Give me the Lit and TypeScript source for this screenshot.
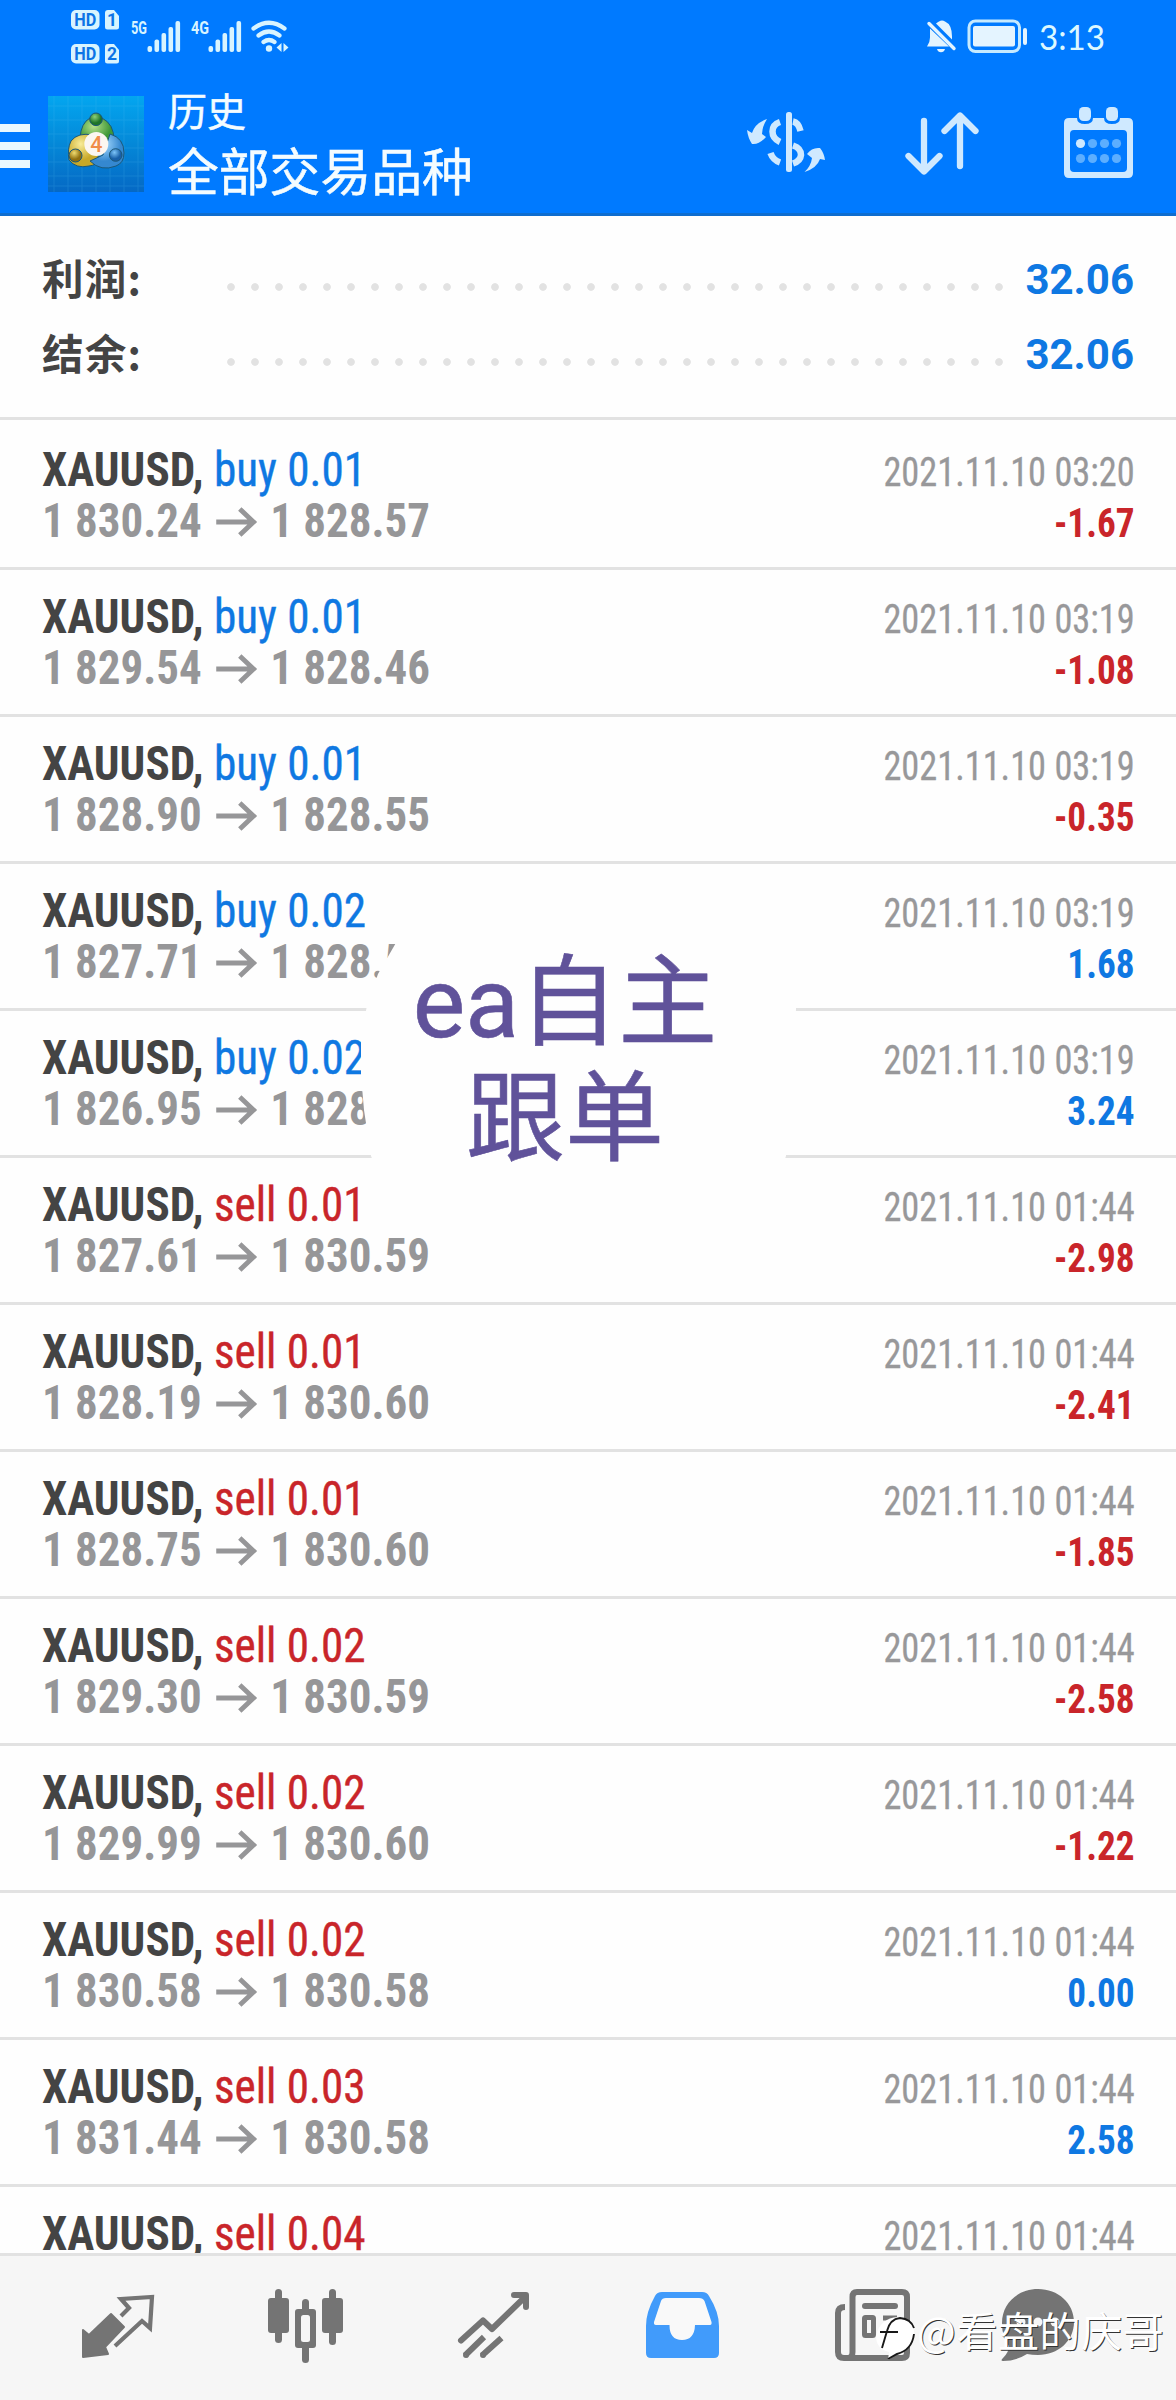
import { LitElement, html, css, svg } from "lit";
import { customElement } from "lit/decorators.js";

type Deal = { side: "buy" | "sell"; lot: string; open: string; close: string; time: string; profit: string };

const d = (side: "buy" | "sell", lot: string, open: string, close: string, time: string, profit: string): Deal => ({
  side, lot, open, close, time, profit,
});

const deals: Deal[] = [
  d("buy", "0.01", "1 830.24", "1 828.57", "03:20", "-1.67"),
  d("buy", "0.01", "1 829.54", "1 828.46", "03:19", "-1.08"),
  d("buy", "0.01", "1 828.90", "1 828.55", "03:19", "-0.35"),
  d("buy", "0.02", "1 827.71", "1 828.55", "03:19", "1.68"),
  d("buy", "0.02", "1 826.95", "1 828.57", "03:19", "3.24"),
  d("sell", "0.01", "1 827.61", "1 830.59", "01:44", "-2.98"),
  d("sell", "0.01", "1 828.19", "1 830.60", "01:44", "-2.41"),
  d("sell", "0.01", "1 828.75", "1 830.60", "01:44", "-1.85"),
  d("sell", "0.02", "1 829.30", "1 830.59", "01:44", "-2.58"),
  d("sell", "0.02", "1 829.99", "1 830.60", "01:44", "-1.22"),
  d("sell", "0.02", "1 830.58", "1 830.58", "01:44", "0.00"),
  d("sell", "0.03", "1 831.44", "1 830.58", "01:44", "2.58"),
  d("sell", "0.04", "", "", "01:44", ""),
];

const bars = (x: number) =>
  [0, 1, 2, 3, 4].map((i) => {
    const h = [6, 12.5, 19, 25, 31][i];
    return svg`<rect x=${x + i * 7} y=${52 - h} width="4.6" height=${h} rx="2"/>`;
  });

@customElement("app-root")
export class AppRoot extends LitElement {
  static styles = css`
    :host { display: block; width: 1176px; height: 2400px; overflow: hidden; position: relative;
      background: #fefefe; font-family: Roboto, "Noto Sans CJK SC", sans-serif; }
    * { box-sizing: border-box; }
    svg { display: block; flex: none; overflow: visible; }
    .page { height: 2400px; display: flex; flex-direction: column; }
    .head { flex: none; height: 216px; background: #007aff; border-bottom: 3px solid #0e6dcf; }
    .status { height: 72px; display: flex; justify-content: space-between; padding: 0 70px; }
    .bar { display: flex; height: 141px; align-items: flex-start; color: #f4fcff; }
    .burger { width: 30px; margin-top: 52px; display: grid; gap: 10px; }
    .burger i { height: 8px; background: #eaf8ff; }
    .logo { margin: 24px 0 0 18px; }
    .titles { margin-left: 24px; padding-top: 12px; flex: 1; -webkit-text-stroke: 0.5px #f4fcff; }
    .t1 { font-size: 39px; line-height: 58px; }
    .t2 { font-size: 50.8px; line-height: 64px; white-space: nowrap; }
    .acts { display: flex; margin: 32px 41px 0 0; }
    .acts svg:nth-child(2) { margin: 0 82px 0 77px; }
    .sum { flex: none; height: 204px; border-bottom: 3px solid #e2e2e2; padding: 26px 42px 0 42px; }
    .srow { display: flex; height: 75px; line-height: 75px; align-items: center; color: #444; font-weight: 700; font-size: 42px; }
    .slabel { width: 177px; flex: none; font-size: 41.5px; line-height: 71px; margin-top: -4px; letter-spacing: 1.2px; font-family: "Noto Sans CJK SC", sans-serif; }
    .dots { width: 790px; flex: none; height: 8px; margin-top: 14px;
      background: radial-gradient(circle at 12px 4px, #e2e2e2 3.4px, transparent 4.2px) 0 0 / 24px 8px; }
    .sval { flex: 1; text-align: right; color: #0f78e2; }
    .list { flex: 1; min-height: 0; overflow: hidden; padding-top: 3px; }
    .deal { height: 147px; border-bottom: 3px solid #e2e2e2; padding: 21px 41px 0 42px;
      display: flex; justify-content: space-between; line-height: 51px; white-space: nowrap;
      font-family: "Roboto Condensed", Roboto, sans-serif; font-stretch: 75%; }
    .deal:last-child { height: 67px; border: 0; }
    .main { font-size: 48px; transform: scaleX(0.9405); transform-origin: 0 0; }
    .sym { font-weight: 700; color: #444; }
    .buy, .pos { color: #0f78e2; }
    .sell, .neg { color: #c9252a; }
    .main .buy, .main .sell { -webkit-text-stroke: 0.4px currentColor; }
    .prices { display: flex; font-weight: 700; color: #969698; align-items: center; transform: scaleX(0.996); transform-origin: 0 0; }
    .arrow { margin: 3px 14px 0 15px; }
    .side { font-size: 40px; text-align: right; padding-top: 3px; }
    .time { color: #98989a; transform: scaleX(0.908); transform-origin: 100% 0; -webkit-text-stroke: 0.3px currentColor; }
    .profit { font-weight: 700; transform: scaleX(0.93); transform-origin: 100% 0; }
    .nav { flex: none; height: 147px; border-top: 3px solid #e2e2e2; background: #f6f6f6;
      display: grid; grid-template-columns: repeat(5, 188px) 148px; padding: 30px 64px 0 24px; justify-items: center; }
    .blob { position: absolute; left: 356px; top: 930px; }
    .note { position: absolute; left: 365px; top: 945px; width: 400px; text-align: center; color: #60529a;
      font-size: 99px; line-height: 116px; -webkit-text-stroke: 0.6px #60529a; }
    .brand { position: absolute; left: 873px; top: 2302px; display: flex; align-items: flex-start; color: #fff;
      font-family: "Noto Sans CJK SC", sans-serif; font-size: 41px; line-height: 54px; letter-spacing: 0.6px; white-space: nowrap;
      text-shadow: 1px 1px 0 #333; }
    .brand svg { margin-top: 11px; }
  `;

  private statusLeft() {
    return html`<svg width="230" height="72" viewBox="70 0 230 72" fill="#d8f4ff" font-family="Roboto">
      ${[0, 34].map((y, i) => svg`<g transform=${`translate(0 ${y})`}>
        <rect x="71" y="10" width="28.500" height="19.500" rx="5"/>
        <path d="M105 13q0-3 3-3h6l5 6v11q0 2.500-2.500 2.500h-9q-2.500 0-2.500-2.500z"/>
        <g fill="#0c74e6" font-weight="700" text-anchor="middle"><text x="85.300" y="26" font-size="17.500" textLength="22" lengthAdjust="spacingAndGlyphs">HD</text><text x="112" y="26" font-size="17.500">${i + 1}</text></g></g>`)}
      <g font-weight="700" font-size="18.500"><text x="131" y="34" textLength="16" lengthAdjust="spacingAndGlyphs">5G</text><text x="191" y="34" textLength="18" lengthAdjust="spacingAndGlyphs">4G</text></g>
      ${bars(147.5)}${bars(208.5)}
      <g fill="none" stroke="#d8f4ff" stroke-width="4.200" stroke-linecap="round"><path d="M253.500 28.500q15.500-11.500 31 0M258.500 35.500q10.500-8 21 0M263.500 42q5.500-4 11 0"/></g>
      <circle cx="269" cy="48.500" r="3.200"/><path d="M281.500 43v9l-5-4.500zM283.500 43v9l5-4.500z"/>
    </svg>`;
  }
  private statusRight() {
    return html`<svg width="186" height="72" viewBox="920 0 186 72" fill="#e4f4ff">
      <path d="M927 46.500q3-4 3-9l0-9 19 18zM936 23.500q2-1.500 3-2 3-2 6 0 7 3 7 15v3z M937 49h8q-1 3.300-4 3.300t-4-3.300z"/>
      <path d="M929 23.500l25 25" stroke="#e4f4ff" stroke-width="3.400" stroke-linecap="round"/>
      <rect x="969" y="21" width="50.500" height="30.500" rx="6.500" fill="none" stroke="#c6eaff" stroke-width="3"/>
      <rect x="973" y="26" width="42" height="20.500" rx="2"/><rect x="1023" y="28" width="4" height="17" rx="2"/>
      <text x="1039" y="50" font-family="Lato" font-size="35.500" textLength="66" lengthAdjust="spacingAndGlyphs" fill="#dcf8ff">3:13</text>
    </svg>`;
  }
  private logo() {
    return html`<svg class="logo" width="96" height="96" viewBox="0 0 96 96">
      <defs>
        <linearGradient id="bg" x1="0" y1="0" x2="0" y2="1"><stop offset="0" stop-color="#03a6f0"/><stop offset=".5" stop-color="#0488d8"/><stop offset="1" stop-color="#0568c4"/></linearGradient>
        <radialGradient id="g1" cx=".4" cy=".3"><stop offset="0" stop-color="#b6e08a"/><stop offset="1" stop-color="#3f9838"/></radialGradient>
        <radialGradient id="g2" cx=".4" cy=".3"><stop offset="0" stop-color="#f8ec98"/><stop offset="1" stop-color="#c8a828"/></radialGradient>
        <radialGradient id="g3" cx=".4" cy=".3"><stop offset="0" stop-color="#a8dcff"/><stop offset="1" stop-color="#3588d0"/></radialGradient>
        <radialGradient id="b1" cx=".4" cy=".3"><stop offset="0" stop-color="#8cd078"/><stop offset="1" stop-color="#1d7428"/></radialGradient>
        <radialGradient id="b2" cx=".4" cy=".3"><stop offset="0" stop-color="#f0dc70"/><stop offset="1" stop-color="#907010"/></radialGradient>
        <radialGradient id="b3" cx=".4" cy=".3"><stop offset="0" stop-color="#7cc4f8"/><stop offset="1" stop-color="#1860a8"/></radialGradient>
      </defs>
      <path d="M0 0H96V96H0z" fill="url(#bg)"/>
      <path d="M6 0V96M20 0V96M34 0V96M48 0V96M62 0V96M76 0V96M90 0V96M0 10H96M0 24H96M0 38H96M0 52H96M0 66H96M0 80H96M0 90H96" stroke="#5cc4f4" stroke-width="1" opacity=".18"/>
      <g stroke="#1c5878" stroke-width="1">
        <path d="M42 22q-9 5-10 20l12 8h16l6-6q0-16-12-22z" fill="url(#g1)"/>
        <path d="M45 39q-15-3-22 6-4 8-2 19 7 9 20 6 8-1 10-6z" fill="url(#g2)"/>
        <path d="M62 38q14 4 14 19 0 10-8 13-15 6-26-5l13-6z" fill="url(#g3)"/>
        <circle cx="48" cy="23.300" r="6.300" fill="url(#b1)"/><circle cx="27.500" cy="59.500" r="6.500" fill="url(#b2)"/><circle cx="67.700" cy="59" r="6.300" fill="url(#b3)"/>
      </g>
      <circle cx="48.300" cy="48" r="12" fill="#fbf6f0"/>
      <text x="48.300" y="55.500" text-anchor="middle" font-family="Roboto" font-size="21.500" font-weight="500" fill="#f08c48">4</text>
    </svg>`;
  }

  private actions() {
    return html`<div class="acts">
      <svg width="82" height="76" viewBox="745 104 82 76" fill="#cfe9ff">
        <path d="M767 119Q762 127 762 134L766 137Q759 145 752 144Q748 138 747 130L752 133Q755 123 767 119zM804.500 172Q811 166 812 158L807 154Q812 147 820 148Q824 153 825 160L820 159Q817 168 804.500 172z"/>
        <rect x="786" y="112" width="6" height="60" rx="2.500"/>
        <path d="M780 122Q772.500 124.500 772.500 131.500Q772.500 138.500 780 142M793 121.500Q798.500 122.500 800.500 131M793 145.500Q801 148 801 155Q800.500 161 793 163.500M770.500 153Q773 160 780 162.500" fill="none" stroke="#cfe9ff" stroke-width="6.500"/>
      </svg>
      <svg width="76" height="76" viewBox="904 104 76 76" fill="none" stroke="#cfe9ff" stroke-width="6.300" stroke-linecap="round" stroke-linejoin="round"><path d="M924 121V171M908.500 156L924 171.500L939.500 156M960 166V116M944.500 131L960 115.500L975.500 131"/></svg>
      <svg width="73" height="76" viewBox="1062 104 73 76">
        <path fill="#cfe9ff" fill-rule="evenodd" d="M1069 118H1077Q1077 124 1085 124T1093 118H1104Q1104 124 1112 124T1120 118H1128Q1133 118 1133 123V173Q1133 178 1128 178H1069Q1064 178 1064 173V123Q1064 118 1069 118zM1074 130Q1070 130 1070 134V168Q1070 172 1074 172H1123Q1127 172 1127 168V134Q1127 130 1123 130z"/>
        <rect x="1079" y="107" width="12" height="14" rx="4.500" fill="#cfe9ff"/><rect x="1106" y="107" width="12" height="14" rx="4.500" fill="#cfe9ff"/>
        ${[0, 1].map((r) => [0, 1, 2, 3].map((c) => svg`<circle cx=${1080.5 + c * 12} cy=${143.5 + r * 15} r="4.600" fill=${r + c ? "#5caeff" : "#cfe9ff"}/>`))}
      </svg></div>`;
  }

  private nav() {
    const g = "#747474";
    return html`<div class="nav">
      <svg width="80" height="80" viewBox="78 2286 80 80"><path fill=${g} stroke=${g} stroke-width="2" stroke-linejoin="round" d="M83 2330L89 2335L111 2314L124 2327L105 2347L108 2354L83 2357z"/><path fill="none" stroke=${g} stroke-width="4.200" d="M121 2316L129 2308L121 2299L152 2297L150 2328L142 2321L115 2346"/></svg>
      <svg width="80" height="80" viewBox="266 2286 80 80" fill=${g}><rect x="275" y="2289" width="7" height="54" rx="3.500"/><rect x="268" y="2298" width="21" height="35" rx="3"/><rect x="329" y="2289" width="7" height="56" rx="3.500"/><rect x="322" y="2298" width="21" height="35" rx="3"/><rect x="302" y="2299" width="7" height="64" rx="3.500"/><rect x="295" y="2309" width="21" height="39" rx="3"/><rect x="301" y="2315" width="9" height="27" rx="2.500" fill="#f6f6f6"/></svg>
      <svg width="80" height="80" viewBox="454 2286 80 80" fill="none" stroke=${g} stroke-width="6" stroke-linejoin="round"><path stroke-linecap="round" d="M461 2340.500L483 2320.500L492 2329L525 2297M514 2295H526V2307"/><path d="M484 2337L465 2355.500M501.500 2338L482 2355.500"/><circle cx="466" cy="2355" r="1" stroke-width="4"/><circle cx="483" cy="2355" r="1" stroke-width="4"/></svg>
      <svg width="80" height="80" viewBox="642 2286 80 80"><path fill="#419bfb" d="M662 2292H702Q707 2292 709 2296Q719 2312 719 2326V2353Q719 2358 714 2358H651Q646 2358 646 2353V2326Q646 2312 655 2296Q657 2292 662 2292z"/><path fill="#f9f9f9" d="M666 2298H699Q703 2298 704.500 2301L711.500 2322Q712 2325 710 2325H695Q694.500 2340 682 2340T669.500 2325H656Q653.500 2325 654 2322L661 2301Q662 2298 666 2298z"/></svg>
      <svg width="80" height="80" viewBox="830 2286 80 80"><path fill="none" stroke=${g} stroke-width="6" d="M845 2307Q838 2307 838 2313V2352Q838 2358 844 2358H902Q907 2358 907 2353V2297Q907 2292 902 2292H857Q852.500 2292 852.500 2297V2352Q852.500 2358 848 2358"/><rect x="862" y="2303" width="36" height="6" rx="3" fill=${g}/><rect x="864.500" y="2317.500" width="9" height="18" rx="1" fill="none" stroke=${g} stroke-width="5"/><path d="M883 2318H897M883 2332H897" stroke=${g} stroke-width="5"/></svg>
      <svg width="80" height="80" viewBox="998 2286 80 80"><path fill=${g} d="M1038 2289C1058 2289 1074 2303 1074 2322S1058 2355 1038 2355Q1032 2355 1027 2354Q1016 2361 1003 2361Q1000 2361 1003 2358Q1009 2352 1009 2346Q1002 2338 1002 2323C1002 2303 1018 2289 1038 2289z"/><g fill="#f6f6f6"><circle cx="1021" cy="2322" r="4.500"/><circle cx="1038" cy="2322" r="4.500"/><circle cx="1055" cy="2322" r="4.500"/></g></svg>
    </div>`;
  }

  render() {
    return html`<div class="page">
      <div class="head">
        <div class="status">${this.statusLeft()}${this.statusRight()}</div>
        <div class="bar"><div class="burger"><i></i><i></i><i></i></div>${this.logo()}
          <div class="titles"><div class="t1">历史</div><div class="t2">全部交易品种</div></div>${this.actions()}</div>
      </div>
      <div class="sum">${["利润:", "结余:"].map((l) => html`<div class="srow"><span class="slabel">${l}</span><span class="dots"></span><span class="sval">32.06</span></div>`)}</div>
      <div class="list">${deals.map((r) => html`<div class="deal">
        <div class="main"><div><span class="sym">XAUUSD,</span> <span class=${r.side}>${r.side} ${r.lot}</span></div>
          ${r.open ? html`<div class="prices"><span>${r.open}</span><svg class="arrow" width="44" height="30" viewBox="0 0 42 30" preserveAspectRatio="none" fill="none" stroke="#969698" stroke-width="5"><path d="M0 15H38M24 2L38 15L24 28"/></svg><span>${r.close}</span></div>` : ""}</div>
        <div class="side"><div class="time">2021.11.10 ${r.time}</div>${r.profit ? html`<div class="profit ${r.profit.startsWith("-") ? "neg" : "pos"}">${r.profit}</div>` : ""}</div>
      </div>`)}</div>
      ${this.nav()}
      <svg class="blob" width="450" height="260" viewBox="356 930 450 260"><path fill="#fefefe" d="M397 941L378 974L367 1005L361 1040L361 1075L364 1110L371 1156L384 1185H775L786 1156L796 1009L790 941z"/></svg>
      <div class="note">ea自主<br>跟单</div>
      <div class="brand"><svg width="44" height="48" viewBox="873 2313 44 48"><path fill="#fff" d="M876 2336Q880 2318 898 2317Q915 2319 914 2335Q912 2351 897 2354L888 2360L889 2352Q876 2349 876 2336z"/><path d="M882 2348L887 2331Q890 2319 900 2318Q911 2319 914 2328M880 2332H898M914 2334Q912 2350 897 2354L888 2359" fill="none" stroke="#181818" stroke-width="1.900"/></svg>@看盘的庆哥</div>
    </div>`;
  }
}
